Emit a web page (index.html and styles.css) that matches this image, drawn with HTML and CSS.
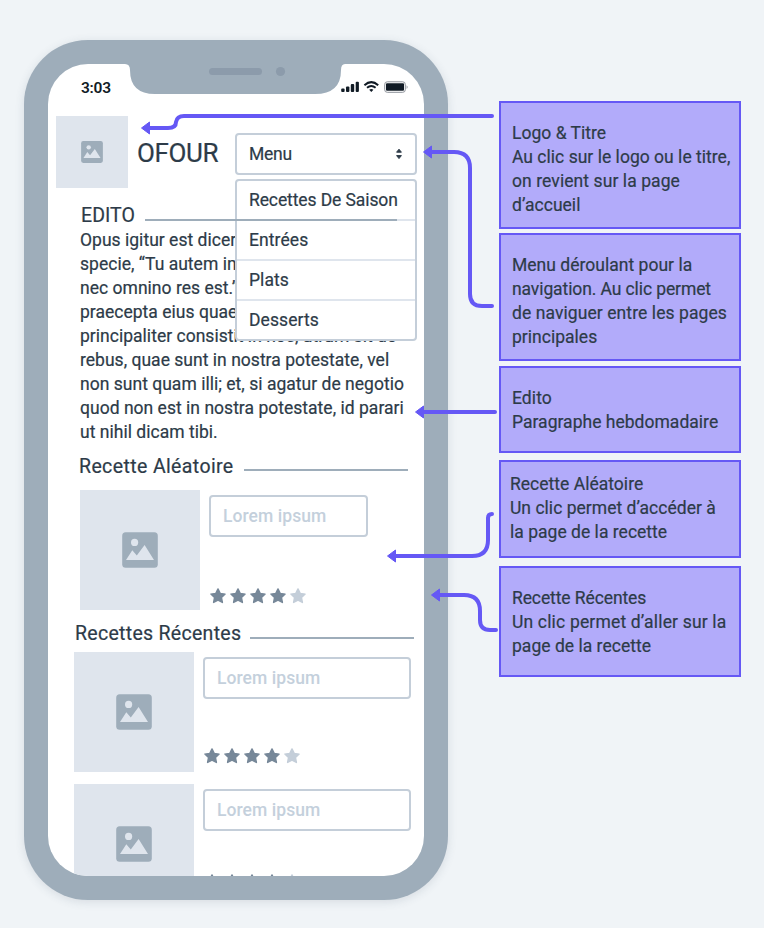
FILE: index.html
```html
<!DOCTYPE html>
<html lang="fr">
<head>
<meta charset="utf-8">
<title>OFOUR</title>
<link rel="stylesheet" href="styles.css">
</head>
<body>
<svg class="defs" aria-hidden="true">
  <symbol id="picture" viewBox="0 0 36 36">
    <rect x=".2" y=".2" width="35.600" height="35.600" rx="3.500" fill="#9eadba"/>
    <circle cx="12.6" cy="10.4" r="3.6" fill="#dfe5ed"/>
    <path d="M4 28 L10.3 18.2 L14.8 23.4 L22.6 13 L32 28 Z" fill="#dfe5ed"/>
  </symbol>
  <symbol id="star" viewBox="0 0 16 16">
    <path d="M8 .9 L10.2 5.4 L15.1 6.1 L11.5 9.6 L12.4 14.5 L8 12.2 L3.6 14.5 L4.5 9.6 L.9 6.1 L5.8 5.4 Z" fill="currentColor" stroke="currentColor" stroke-width="1.4" stroke-linejoin="round"/>
  </symbol>
</svg>
<main class="board">
  <section class="phone">
    <div class="screen">
      <div class="status">
        <span class="time">3:03</span>
        <svg class="indicators" width="68" height="14" viewBox="0 0 68 14">
          <g fill="#111b25">
            <rect x="0.2" y="8.4" width="3.4" height="3.7" rx="1"/>
            <rect x="5" y="6.6" width="3.4" height="5.5" rx="1"/>
            <rect x="9.8" y="4" width="3.4" height="8.1" rx="1"/>
            <rect x="14.7" y="1.7" width="3.2" height="10.4" rx="1"/>
            <rect x="45" y="3.3" width="18" height="7.5" rx="1"/>
          </g>
          <g fill="none" stroke="#111b25">
            <path d="M23.4 5.2 Q30.3 -.9 37.2 5.2" stroke-width="2"/>
            <path d="M26 7.8 Q30.3 4.2 34.6 7.8" stroke-width="1.9"/>
          </g>
          <path d="M28.2 9.8 Q30.3 8.2 32.4 9.8 L30.3 12 Z" fill="#111b25"/>
          <rect x="43.7" y="1.8" width="20.6" height="10.5" rx="2.6" fill="none" stroke="#8d9299" stroke-width="1"/>
          <path d="M65.6 5.2 Q67.6 7 65.6 8.9 Z" fill="#8d9299"/>
        </svg>
      </div>
      <header class="header">
        <div class="logo"><svg width="22" height="22"><use href="#picture"/></svg></div>
        <h1 class="title">OFOUR</h1>
        <div class="nav">
          <div class="select"><span>Menu</span>
            <svg width="8" height="12" viewBox="0 0 8 12"><path d="M4 1.200 L6.4 4.2 H1.6 Z M4 10.600 L6.4 7.6 H1.6 Z" fill="#2d3b48" stroke="#2d3b48" stroke-linejoin="round"/></svg>
          </div>
          <ul class="options">
            <li class="tight">Recettes De Saison</li>
            <li>Entrées</li>
            <li>Plats</li>
            <li>Desserts</li>
          </ul>
        </div>
      </header>
      <h2 class="heading edito"><span>EDITO</span><i class="rule"></i></h2>
      <p class="copy">
        <span>Opus igitur est dicer</span>
        <span>specie, “Tu autem in</span>
        <span>nec omnino res est.”</span>
        <span>praecepta eius quae</span>
        <span>principaliter consistit in hoc, utrum sit de</span>
        <span>rebus, quae sunt in nostra potestate, vel</span>
        <span>non sunt quam illi; et, si agatur de negotio</span>
        <span>quod non est in nostra potestate, id parari</span>
        <span>ut nihil dicam tibi.</span>
      </p>
      <h2 class="heading random"><span>Recette Aléatoire</span><i class="rule"></i></h2>
      <article class="recipe first">
        <div class="thumb"><svg width="36" height="36"><use href="#picture"/></svg></div>
        <div class="info">
          <div class="field short">Lorem ipsum</div>
          <div class="stars"><svg><use href="#star"/></svg><svg><use href="#star"/></svg><svg><use href="#star"/></svg><svg><use href="#star"/></svg><svg class="off"><use href="#star"/></svg></div>
        </div>
      </article>
      <h2 class="heading recent"><span>Recettes Récentes</span><i class="rule"></i></h2>
      <article class="recipe">
        <div class="thumb"><svg width="36" height="36"><use href="#picture"/></svg></div>
        <div class="info">
          <div class="field">Lorem ipsum</div>
          <div class="stars"><svg><use href="#star"/></svg><svg><use href="#star"/></svg><svg><use href="#star"/></svg><svg><use href="#star"/></svg><svg class="off"><use href="#star"/></svg></div>
        </div>
      </article>
      <article class="recipe last">
        <div class="thumb"><svg width="36" height="36"><use href="#picture"/></svg></div>
        <div class="info">
          <div class="field">Lorem ipsum</div>
          <div class="stars"><svg><use href="#star"/></svg><svg><use href="#star"/></svg><svg><use href="#star"/></svg><svg><use href="#star"/></svg><svg class="off"><use href="#star"/></svg></div>
        </div>
      </article>
    </div>
    <svg class="notch" width="220" height="30" viewBox="0 0 220 30">
      <path d="M0 0 Q5 0 5 6 Q5 30 30 30 H190 Q216 30 216 6 Q216 0 220 0 Z" fill="#9eadba"/>
      <rect x="84" y="4" width="53" height="7" rx="3.5" fill="#8c9bab"/>
      <circle cx="155.500" cy="7.500" r="4.600" fill="#8c9bab"/>
    </svg>
  </section>
  <aside class="notes">
    <div class="note n1"><span>Logo &amp; Titre</span><span>Au clic sur le logo ou le titre,</span><span class="loose">on revient sur la page</span><span>d’accueil</span></div>
    <div class="note n2"><span>Menu déroulant pour la</span><span class="tight">navigation. Au clic permet</span><span class="loose">de naviguer entre les pages</span><span>principales</span></div>
    <div class="note n3"><span class="loose">Edito</span><span>Paragraphe hebdomadaire</span></div>
    <div class="note n4"><span>Recette Aléatoire</span><span>Un clic permet d’accéder à</span><span>la page de la recette</span></div>
    <div class="note n5"><span class="tight">Recette Récentes</span><span class="looser">Un clic permet d’aller sur la</span><span>page de la recette</span></div>
  </aside>
  <svg class="arrows" width="764" height="928" viewBox="0 0 764 928">
    <g fill="none" stroke="#6558f5" stroke-width="4" stroke-linecap="round" stroke-linejoin="round">
      <path d="M147 128 H168 Q176 128 176 122 Q177 116 184 116 H492"/>
      <path d="M430 152 H454 Q470 152 470 168 V294 Q470 306 482 306 H492"/>
      <path d="M422 412 H495"/>
      <path d="M394 556 H472 Q488 556 488 540 V518 Q488 514 492 514"/>
      <path d="M438 595 H464 Q480 595 480 611 V620 Q480 630 490 630 H496"/>
    </g>
    <g fill="#6558f5" stroke="#6558f5" stroke-linejoin="round">
      <path d="M141.500 128 L149.500 122 V134 Z"/>
      <path d="M423.500 152 L431.500 146 V158 Z"/>
      <path d="M415.500 412 L423.500 406 V418 Z"/>
      <path d="M387.500 556 L395.500 550 V562 Z"/>
      <path d="M431.500 595 L439.500 589 V601 Z"/>
    </g>
  </svg>
</main>
</body>
</html>
```
FILE: styles.css
```css
* { box-sizing: border-box; margin: 0; padding: 0; }
body { background: #f0f4f7; font: 17.5px/24px Roboto, "Liberation Sans", sans-serif; letter-spacing: .02px; color: #2d3b48; -webkit-text-stroke: .2px; }
svg { display: block; }
.defs { position: absolute; width: 0; height: 0; }
.board { position: relative; display: flex; width: 764px; height: 928px; overflow: hidden; padding: 40px 0 0 24px; }
.phone { position: relative; width: 424px; height: 860px; padding: 24px; background: #9eadba; border-radius: 64px; box-shadow: 0 2px 10px rgba(60, 80, 100, .14); }
.screen { position: relative; width: 376px; height: 812px; background: #fff; border-radius: 40px; overflow: hidden; }
.notch { position: absolute; left: 101px; top: 24px; }
.status { display: flex; justify-content: space-between; height: 52px; padding: 12px 15px 0 33px; }
.time { font-size: 15.5px; font-weight: 600; letter-spacing: -.25px; color: #111b25; -webkit-text-stroke: 0; }
.indicators { margin-top: 4px; }
.header { display: flex; height: 88px; padding-left: 8px; }
.logo { display: grid; place-items: center; width: 72px; height: 72px; background: #dfe5ed; }
.title { width: 98px; margin-left: 9px; font-size: 26px; font-weight: 400; line-height: 74px; letter-spacing: -.35px; white-space: nowrap; }
.nav { width: 182px; margin-top: 17px; }
.select { display: flex; align-items: center; justify-content: space-between; height: 42px; padding: 0 12px; border: 2px solid #c4ced9; border-radius: 4px; background: #fff; letter-spacing: -.25px; }
.options { position: relative; z-index: 1; margin-top: 4px; border: 2px solid #c4ced9; border-radius: 4px; background: #fff; list-style: none; letter-spacing: .08px; }
.options li { height: 40px; padding: 7px 12px; border-bottom: 2px solid #dfe5ed; }
.options li:last-child { height: 38px; border-bottom: 0; }
span { white-space: nowrap; }
.heading { display: flex; height: 24px; font-size: 19.5px; font-weight: 400; white-space: nowrap; }
.rule { position: relative; z-index: 2; width: 164px; height: 2px; margin: 15px 0 0 auto; background: #9eadba; }
.edito { width: 316px; margin-left: 33px; letter-spacing: .05px; }
.edito .rule { width: 252px; }
.copy { height: 216px; margin-left: 32px; }
.copy span { display: block; width: max-content; }
.random { width: 329px; margin: 11px 0 0 31px; letter-spacing: .38px; }
.random .rule { margin-top: 14px; }
.recipe { display: flex; gap: 9px; margin: 0 0 12px 26px; }
.recipe.first { margin: 11px 0 12px 32px; }
.thumb { display: grid; place-items: center; width: 120px; height: 120px; background: #dfe5ed; }
.info { display: flex; flex-direction: column; justify-content: space-between; padding: 5px 0 8px; }
.first .info { padding-bottom: 6px; }
.last .info { padding-bottom: 14px; }
.field { width: 208px; height: 42px; padding: 7px 12px; border: 2px solid #c4ced9; border-radius: 4px; letter-spacing: .06px; color: #c4d0dc; font-weight: 500; -webkit-text-stroke: 0; }
.short { width: 159px; }
.stars { display: flex; gap: 4px; padding-left: 1px; color: #778899; }
.stars svg { width: 16px; height: 16px; }
.stars .off { color: #c4ced9; }
.recent { width: 339px; margin: 0 0 6px 27px; letter-spacing: .29px; }
.notes { width: 242px; margin: 61px 0 0 51px; }
.note { display: flex; flex-direction: column; align-items: flex-start; height: 128px; margin-bottom: 4px; padding: 18px 11px 0; border: 2px solid #6558f5; background: #b2abfa; }
.n2 { margin-bottom: 5px; }
.n3 { height: 87px; margin-bottom: 7px; }
.n4 { height: 98px; padding: 10px 9px 0; margin-bottom: 8px; }
.n5 { height: 111px; }
.tight { letter-spacing: -.1px; }
.loose { letter-spacing: .08px; }
.looser { letter-spacing: .17px; }
.arrows { position: absolute; left: 0; top: 0; z-index: 3; }
```
